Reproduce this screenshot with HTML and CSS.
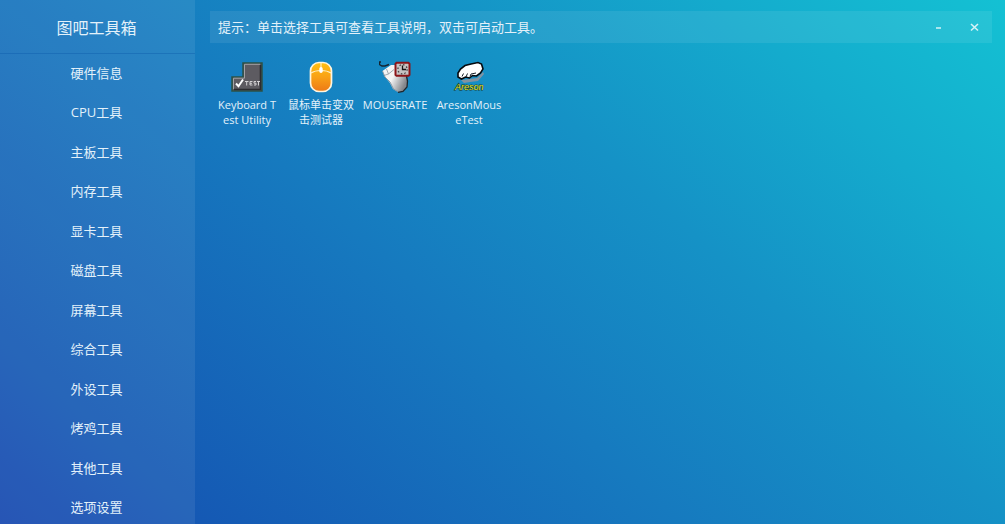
FILE: index.html
```html
<!DOCTYPE html>
<html lang="zh-CN">
<head>
<meta charset="utf-8">
<meta name="viewport" content="width=device-width, initial-scale=1">
<title>图吧工具箱</title>
<link rel="stylesheet" href="styles.css">
</head>
<body class="app">
<aside class="sidebar">
  <h1 class="brand">图吧工具箱</h1>
  <nav class="menu">
    <a class="menu-link" href="#hardware">硬件信息</a>
    <a class="menu-link" href="#cpu">CPU工具</a>
    <a class="menu-link" href="#board">主板工具</a>
    <a class="menu-link" href="#memory">内存工具</a>
    <a class="menu-link" href="#gpu">显卡工具</a>
    <a class="menu-link" href="#disk">磁盘工具</a>
    <a class="menu-link" href="#screen">屏幕工具</a>
    <a class="menu-link" href="#general">综合工具</a>
    <a class="menu-link" href="#peripheral">外设工具</a>
    <a class="menu-link" href="#stress">烤鸡工具</a>
    <a class="menu-link" href="#other">其他工具</a>
    <a class="menu-link" href="#options">选项设置</a>
  </nav>
</aside>
<main class="content">
  <header class="tipbar">
    <p class="tip">提示：单击选择工具可查看工具说明，双击可启动工具。</p>
    <button class="winbtn" type="button" aria-label="最小化">
      <svg width="10" height="10" viewBox="0 0 10 10"><path d="M3 6h5" stroke="#d5f3f7" stroke-width="1.500"/></svg>
    </button>
    <button class="winbtn" type="button" aria-label="关闭">
      <svg width="10" height="10" viewBox="0 0 10 10"><path d="M2 2l7 6.500M9 2l-7 6.500" stroke="#d5f3f7" stroke-width="1.600"/></svg>
    </button>
  </header>
  <section class="tools">
    <button class="tool" type="button">
      <svg class="tool-icon" viewBox="0 0 32 32">
        <path d="M12 2h19v28H1V16h11z" fill="#5d5b61" stroke="#2b5145" stroke-width="1.500"/>
        <path d="M2.500 28V17.200h11V3.300H29" fill="none" stroke="#a3a1a5" stroke-width="1"/>
        <path d="M29.500 4v24.500H3" fill="none" stroke="#2d2c30" stroke-width="1.600"/>
        <path d="M5 22.500l2.500 2.700L12 18.500" fill="none" stroke="#fff" stroke-width="2"/>
        <path d="M14 20.500h3.500M15.700 20.500v4M21.500 20.500h-2.500v3.500h2.500M19 22.300h2M25 20.500h-2v1.700h2v1.800H23M26 20.500h3M27.500 20.500v4" fill="none" stroke="#d2d0d2" stroke-width="1"/>
      </svg>
      <span class="tool-name">Keyboard T<br>est Utility</span>
    </button>
    <button class="tool" type="button">
      <svg class="tool-icon" viewBox="0 0 32 32">
        <defs><linearGradient id="orange" x1="0" y1="0" x2="0" y2="1"><stop offset="0" stop-color="#ffc011"/><stop offset=".5" stop-color="#f9a116"/><stop offset="1" stop-color="#ed7917"/></linearGradient></defs>
        <rect x="5.500" y="1.500" width="21" height="29" rx="8.500" fill="url(#orange)" stroke="#fff5df" stroke-width="1.700"/>
        <path d="M6 12c3-2 6-2.500 10-2.500S23 10 26 12M16 2v5" fill="none" stroke="#fff0c8" stroke-width="1.100"/>
        <rect x="14.300" y="6" width="3.400" height="6" rx="1.700" fill="#fff"/>
      </svg>
      <span class="tool-name">鼠标单击变双<br>击测试器</span>
    </button>
    <button class="tool" type="button">
      <svg class="tool-icon" viewBox="0 0 32 32">
        <defs><linearGradient id="shell" x1="0" y1="0" x2="1" y2=".5"><stop offset=".5" stop-color="#f4f4f4"/><stop offset="1" stop-color="#85878c"/></linearGradient></defs>
        <path d="M10 3.500L6 5H3L.5 3.500V1H2" fill="none" stroke="#142430" stroke-width="1.400"/>
        <path d="M3.500 10L7 7.500 12 4h4l5 7 6 4 1.500 5-.5 6-4 4.500-5 .5-5-3-3-6-5-6z" fill="url(#shell)"/>
        <path d="M3.500 10L6 16l5 5 3.500 7 5 3" fill="none" stroke="#8799a7" stroke-width="1"/>
        <path d="M27.500 15l1 5-.5 6-4 4.500-5 .8" fill="none" stroke="#20262c" stroke-width="1.300"/>
        <path d="M5 14.500L9.500 13 15 8.500M9.500 13L7.500 8" fill="none" stroke="#8b959e" stroke-width=".8"/>
        <path d="M17.500 1.800h12l1 1v11l-1 1h-12l-1-1v-11z" fill="#c6c2c2" stroke="#8c1418" stroke-width="2"/>
        <circle cx="23.500" cy="8.300" r="4.600" fill="none" stroke="#4b4446" stroke-width="1.300" stroke-dasharray="1.600 2"/>
        <path d="M23.500 4.500v4h3.500" fill="none" stroke="#181416" stroke-width="1.300"/>
      </svg>
      <span class="tool-name">MOUSERATE</span>
    </button>
    <button class="tool" type="button">
      <svg class="tool-icon" viewBox="0 0 32 32">
        <path d="M8 19l8-1 8-1 6-6 1 2-6 7-8 1-6 1z" fill="#8193a2"/>
        <path d="M5 16V12l2.500-4L12 4.500 18 3l7-1.500 3.500 1.500L30 8l-2.500 4-4 3-4-.5-3 2.500-4-1-4 2z" fill="#fff" stroke="#05090e" stroke-width="1.600"/>
        <path d="M9 15.500l1.500-3M13 16l1.500-3.500M17 15.500l1-2.500 5-1" fill="none" stroke="#18212a" stroke-width="1"/>
        <text x="2" y="29" class="areson">Areson</text>
      </svg>
      <span class="tool-name">AresonMous<br>eTest</span>
    </button>
  </section>
</main>
</body>
</html>
```
FILE: styles.css
```css
* { box-sizing: border-box; }

.app {
  display: flex;
  min-height: 100vh;
  margin: 0;
  color: #e3f1fa;
  font-family: "Open Sans", "Noto Sans CJK SC", sans-serif;
  font-size: 13px;
  background: linear-gradient(42deg, #1547af 0%, #1559b4 13%, #167abf 43%, #1592c6 64%, #14abcd 82%, #14c1d3 100%);
}

.sidebar {
  display: flex;
  flex-direction: column;
  flex: 0 0 195px;
  background: rgba(255, 255, 255, .08);
}

.brand {
  display: flex;
  align-items: center;
  justify-content: center;
  height: 54px;
  margin: 0;
  padding-right: 2px;
  border-bottom: 1px solid rgba(10, 90, 170, .4);
  font-size: 16px;
  font-weight: 400;
}

.menu {
  display: flex;
  flex: 1;
  flex-direction: column;
  justify-content: space-between;
  padding: 3px 2px 1px 0;
}

.menu-link {
  color: inherit;
  line-height: 32px;
  text-align: center;
  text-decoration: none;
}

.content {
  flex: 1;
  min-width: 0;
  padding: 11px 13px 0 15px;
}

.tipbar {
  display: flex;
  align-items: center;
  height: 32px;
  padding: 0 0 0 8px;
  background: rgba(255, 255, 255, .08);
}

.tip {
  flex: 1;
  margin: 0;
  padding-bottom: 2px;
}

.winbtn {
  display: flex;
  align-items: center;
  justify-content: center;
  width: 36px;
  height: 32px;
  padding: 0;
  border: 0;
  background: none;
}

.tools {
  display: flex;
  flex-wrap: wrap;
  gap: 6px;
  padding: 18px 3px;
}

.tool {
  display: flex;
  flex-direction: column;
  align-items: center;
  gap: 4px;
  width: 68px;
  padding: 0;
  border: 0;
  background: none;
  color: inherit;
  font: inherit;
}

.tool-icon {
  width: 32px;
  height: 32px;
}

.tool-name {
  font-size: 11px;
  line-height: 15px;
  white-space: nowrap;
}

.areson {
  fill: #e7ec35;
  stroke: #1d3520;
  stroke-width: 1px;
  paint-order: stroke;
  font-family: "Liberation Sans", sans-serif;
  font-size: 9px;
  font-style: italic;
}
```
